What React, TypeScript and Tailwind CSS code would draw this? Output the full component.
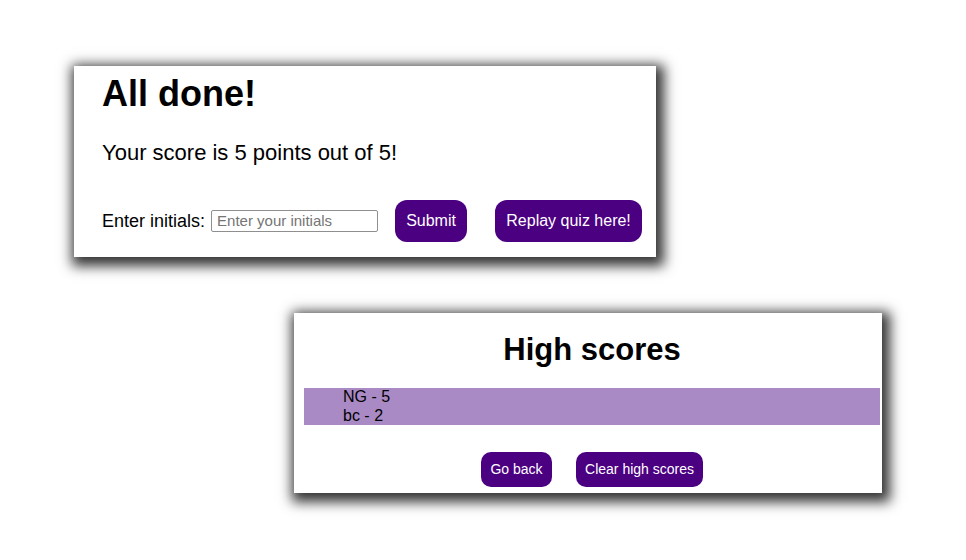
import React from 'react';

const cardShadow = 'shadow-[3px_4px_12px_5px_rgba(0,0,0,0.8)]';

const scores = [
    { initials: 'NG', score: 5 },
    { initials: 'bc', score: 2 },
];

const AllDone: React.FC = () => (
    <div className={`ml-[74px] mt-[66px] w-[582px] h-[191px] bg-white pl-[28px] pt-[10px] ${cardShadow}`}>
        <h1 className="text-[36px] leading-none font-bold text-black">All done!</h1>
        <p className="mt-[30px] text-[22px] leading-none text-black">Your score is 5 points out of 5!</p>
        <div className="mt-[36px] flex items-center">
            <label className="text-[18px] leading-none text-black">Enter initials:</label>
            <input
                type="text"
                placeholder="Enter your initials"
                className="ml-[6px] w-[167px] h-[22px] border border-[#8f8f8f] rounded-[2px] px-[5px] text-[15px] placeholder:text-[#757575] outline-none"
            />
            <button className="ml-[17px] h-[42px] w-[72px] rounded-[12px] bg-[#4b0082] text-white text-[16px]">
                Submit
            </button>
            <button className="ml-[28px] h-[42px] w-[147px] rounded-[12px] bg-[#4b0082] text-white text-[16px]">
                Replay quiz here!
            </button>
        </div>
    </div>
);

const HighScores: React.FC = () => (
    <div className={`ml-[294px] mt-[56px] w-[588px] h-[180px] bg-white pl-[10px] pr-[2px] pt-[21px] ${cardShadow}`}>
        <h2 className="text-center text-[31px] leading-none font-bold text-black">High scores</h2>
        <ul className="mt-[23px] bg-[#a98ac4] pl-[39px] text-[16px] leading-[18.5px] text-black">
            {scores.map((s) => (
                <li key={s.initials}>{s.initials} - {s.score}</li>
            ))}
        </ul>
        <div className="mt-[27px] flex justify-center gap-[24px]">
            <button className="h-[35px] w-[71px] rounded-[10px] bg-[#4b0082] text-white text-[14px]">Go back</button>
            <button className="h-[35px] w-[127px] rounded-[10px] bg-[#4b0082] text-white text-[14px]">Clear high scores</button>
        </div>
    </div>
);

export default function App() {
    return (
        <div className="w-full h-[560px] bg-white overflow-hidden pt-px -mt-px font-['Liberation_Sans',Arial,sans-serif]">
            <AllDone />
            <HighScores />
        </div>
    );
}
